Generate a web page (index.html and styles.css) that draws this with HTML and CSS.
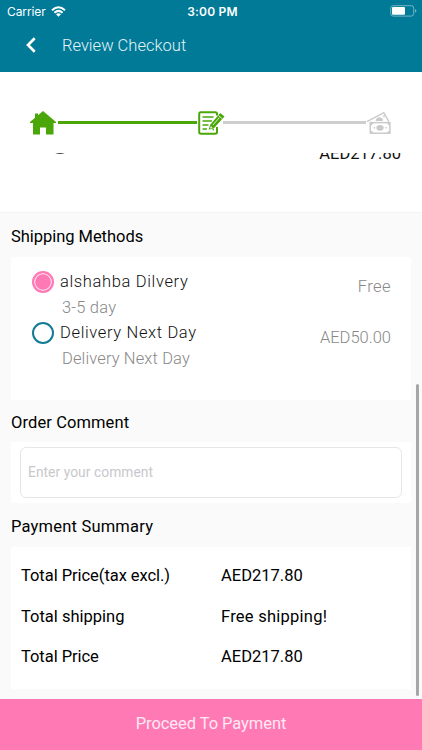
FILE: index.html
```html
<!DOCTYPE html>
<html lang="en">
<head>
<meta charset="utf-8">
<title>Review Checkout</title>
<link rel="stylesheet" href="styles.css">
</head>
<body>
<div class="app">
  <header class="header">
    <div class="status">
      <div class="carrier"><span>Carrier</span>
        <svg width="15" height="11" viewBox="0 0 15 11" fill="none" stroke="#fff" stroke-width="2"><path d="M1 4.2Q7.5-1.7 14 4.2M3.4 6.8Q7.5 3 11.6 6.8"/><path d="M5 8.3Q7.5 6.2 10 8.3L7.5 10.8Z" fill="#fff" stroke="none"/></svg>
      </div>
      <span class="time">3:00 PM</span>
      <svg class="battery" width="28" height="12" viewBox="0 0 28 12"><rect x=".7" y=".7" width="23" height="10.4" rx="2.5" fill="none" stroke="#72b5c5"/><rect x="2" y="2" width="13" height="7.8" rx="1" fill="#fff"/><path d="M25 4Q28 5.9 25 7.8Z" fill="#72b5c5"/></svg>
    </div>
    <div class="nav">
      <svg width="10" height="16" viewBox="0 0 10 16" fill="none" stroke="#fff" stroke-width="2.7"><path d="M8.7 1.3L2 8L8.7 14.7"/></svg>
      <h1>Review Checkout</h1>
    </div>
  </header>
  <div class="steps">
    <svg class="home" width="26" height="24" viewBox="0 0 26 24" fill="#4ba60a"><path d="M13 0L26 11V12H23.5V23.5H16V16.5H10V23.5H3V12H0V11L5 6.8V2.5H8V4.2Z"/></svg>
    <i class="line done"></i>
    <svg class="note" width="28" height="24" viewBox="0 0 28 24" fill="none" stroke="#4ba60a"><path d="M19 16V21Q19 22.8 17.3 22.8H2.8Q1.2 22.8 1.2 21V2.8Q1.2 1.2 2.8 1.2H17.3Q19 1.2 19 2.8V4.5" stroke-width="2"/><path d="M4.5 6H15.5M4.5 10H14M4.5 14H10.5M4.5 18H9M14.5 18.5H16" stroke-width="1.7"/><path d="M10.7 18.8L12.2 13.8L22.2 2L26.5 5.4L15.9 17.2Z" fill="#4ba60a" stroke="none"/><path d="M12.6 17.2L13 15.6L14.2 16.6ZM15 14L21.3 6.6M20.6 4.6L24.3 7.8" stroke="#fff" stroke-width=".8"/></svg>
    <i class="line"></i>
    <svg class="cash" width="25" height="24" viewBox="0 0 26 24" fill="none" stroke="#c9c9c9"><path d="M1 10.5L18.5 1.2L23.8 10.5" stroke-width="1.4"/><path d="M10 9.8Q11 5.5 15 6.2Q18 7 17.5 9.8ZM17.3 4L20 4.2L18.8 6.5Z" fill="#c9c9c9" stroke="none"/><rect x="4.4" y="11.6" width="20.5" height="11" stroke-width="1.5"/><ellipse cx="14.6" cy="17" rx="3.8" ry="3" fill="#c9c9c9" stroke="none"/><path d="M5 12L8 12L5 15ZM21.5 12H24.5V15ZM5 19.5L8 22.5H5ZM21.5 22.5L24.5 19.5V22.5Z" fill="#c9c9c9" stroke="none"/><path d="M8 17H9.5M20 17H21.5" stroke-width="1.5"/></svg>
  </div>
  <main>
    <section class="previous"><i class="dot"></i><span>AED217.80</span></section>
    <h2 class="h-ship">Shipping Methods</h2>
    <section class="card shipping">
      <div class="method"><i class="radio on"></i><div class="label"><b class="n1">alshahba Dilvery</b><small class="d1">3-5 day</small></div><span class="price p1">Free</span></div>
      <div class="method"><i class="radio"></i><div class="label"><b class="n2">Delivery Next Day</b><small class="d2">Delivery Next Day</small></div><span class="price p2">AED50.00</span></div>
    </section>
    <h2 class="h-order">Order Comment</h2>
    <section class="card comment"><div class="field">Enter your comment</div></section>
    <h2 class="h-pay">Payment Summary</h2>
    <section class="card summary">
      <div class="row"><span class="s1">Total Price(tax excl.)</span><span class="v1">AED217.80</span></div>
      <div class="row"><span class="s2">Total shipping</span><span class="v2">Free shipping!</span></div>
      <div class="row"><span class="s3">Total Price</span><span class="v1">AED217.80</span></div>
    </section>
  </main>
  <div class="proceed"><span>Proceed To Payment</span></div>
  <i class="scrollbar"></i>
</div>
</body>
</html>
```
FILE: styles.css
```css
* { box-sizing: border-box; }
body { margin: 0; background: #fafafa; font-family: Roboto, sans-serif; color: #111; }
.app { position: relative; width: 422px; height: 750px; overflow: hidden; display: flex; flex-direction: column; white-space: nowrap; }
.header { height: 71.5px; flex: none; background: #007a97; color: #fff; }
.status { height: 22px; display: grid; grid-template-columns: 1fr auto 1fr; align-items: center; padding: 0 4px 0 7px; }
.carrier { display: flex; align-items: center; gap: 5px; font-family: Inter, sans-serif; font-size: 12px; letter-spacing: -.1px; }
.time { font-family: Inter, sans-serif; font-weight: 600; font-size: 12px; letter-spacing: .2px; }
.battery { justify-self: end; }
.nav { display: flex; align-items: center; height: 46px; padding-left: 26px; gap: 26px; }
h1 { margin: 0; font-size: 16.5px; font-weight: 300; letter-spacing: .01px; color: #e2f3f8; }
.steps { height: 81.5px; flex: none; background: #fff; display: flex; align-items: center; padding: 21px 31px 0 30px; }
.steps svg { flex: none; }
.line { flex: 1; height: 3px; background: #cecece; }
.line.done { flex: none; width: 139px; background: #4ba60a; margin-left: 2px; }
.note { margin-left: 1px; margin-right: -3px; }
main { flex: 1; }
.previous { height: 60px; background: #fff; border-bottom: 1px solid #f3f3f3; overflow: hidden; display: flex; justify-content: space-between; padding: 0 21px 0 49px; font-size: 16.5px; }
.previous span { line-height: 20px; margin-top: -9.5px; }
.dot { width: 22px; height: 22px; border-radius: 50%; background: #444; margin-top: -21px; }
h2 { margin: 0; height: 44px; line-height: 48px; padding-left: 11px; font-size: 16.5px; font-weight: 400; letter-spacing: -.04px; color: #000; }
.card { width: 400px; margin-left: 11px; background: #fff; }
.shipping { height: 143px; padding: 14px 20px 0 21px; }
.method { height: 51px; display: flex; }
.radio { width: 22px; height: 22px; border: 2px solid #137b96; border-radius: 50%; }
.radio.on { border-color: #ff79b5; background: #ff79b5; box-shadow: inset 0 0 0 1.2px #ffe4f0; }
.label { flex: 1; padding-left: 6px; display: flex; flex-direction: column; }
b { font-size: 16.5px; font-weight: 300; line-height: 22px; letter-spacing: .65px; }
small { font-size: 16.5px; font-weight: 300; line-height: 30px; padding-left: 2px; color: #888; }
.d1 { letter-spacing: .2px; }
.d2 { letter-spacing: .13px; }
.price { font-size: 16.5px; line-height: 32px; font-weight: 300; color: #888; }
.p1 { letter-spacing: .4px; }
.h-order { height: 42px; line-height: 45px; letter-spacing: .1px; }
.h-pay { line-height: 47px; letter-spacing: .2px; }
.comment { height: 61px; padding: 5px 9px; }
.field { height: 51px; border: 1px solid #e6e6e6; border-radius: 6px; padding-left: 7px; line-height: 49px; font-size: 13.8px; color: #c8c8cc; letter-spacing: .05px; }
.summary { height: 142px; padding: 8px 10px; color: #000; font-size: 16.5px; }
.row { height: 40.7px; line-height: 42px; display: grid; grid-template-columns: 200px 1fr; }
.s1, .s3 { letter-spacing: -.05px; }
.v2 { letter-spacing: .25px; }
.proceed { height: 51px; flex: none; background: #ff79b5; color: #ffe9f3; text-align: center; line-height: 49px; font-size: 16.5px; letter-spacing: -.06px; }
.scrollbar { position: absolute; left: 416px; top: 384px; width: 3px; height: 312px; border-radius: 2px; background: #a6a6a6; }
```
